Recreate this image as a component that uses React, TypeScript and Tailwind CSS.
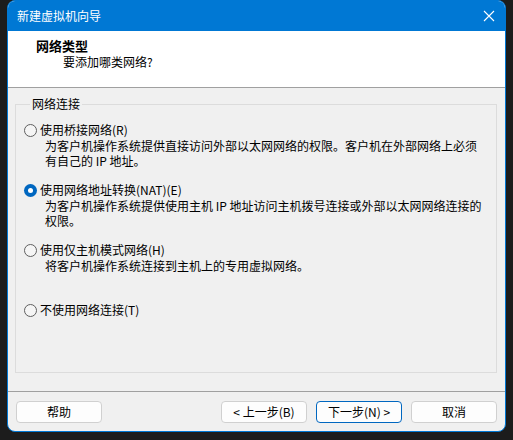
import React, { useState } from 'react';

const FONT = { fontFamily: '"Noto Sans CJK SC", "Noto Sans", sans-serif' };

interface OptionProps {
  label: string;
  lines: string[];
  checked: boolean;
  onSelect: () => void;
}

const Radio: React.FC<{ checked: boolean }> = ({ checked }) =>
  checked ? (
    <span className="flex h-[13px] w-[13px] shrink-0 items-center justify-center rounded-full bg-[#0067c0]">
      <span className="h-[5px] w-[5px] rounded-full bg-white" />
    </span>
  ) : (
    <span className="h-[13px] w-[13px] shrink-0 rounded-full border border-[#5f5f5f] bg-[#f5f5f5]" />
  );

const Option: React.FC<OptionProps> = ({ label, lines, checked, onSelect }) => (
  <div className="h-[60px]">
    <label className="flex h-[16px] cursor-default items-center gap-[3px]" onClick={onSelect}>
      <Radio checked={checked} />
      <span className="leading-[16px]">{label}</span>
    </label>
    <div className="pl-[21px]">
      {lines.map((l) => (
        <div key={l} className="whitespace-nowrap leading-[15px]">
          {l}
        </div>
      ))}
    </div>
  </div>
);

const Button: React.FC<{ children: React.ReactNode; primary?: boolean }> = ({ children, primary }) => (
  <button
    className={
      'h-[22px] w-[86px] rounded-[4px] border bg-[#fdfdfd] text-[12px] leading-[20px] text-black ' +
      (primary ? 'border-[#0067c0]' : 'border-[#d0d0d0]')
    }
  >
    {children}
  </button>
);

const options = [
  {
    label: '使用桥接网络(R)',
    lines: ['为客户机操作系统提供直接访问外部以太网网络的权限。客户机在外部网络上必须', '有自己的 IP 地址。'],
  },
  {
    label: '使用网络地址转换(NAT)(E)',
    lines: ['为客户机操作系统提供使用主机 IP 地址访问主机拨号连接或外部以太网网络连接的', '权限。'],
  },
  { label: '使用仅主机模式网络(H)', lines: ['将客户机操作系统连接到主机上的专用虚拟网络。'] },
  { label: '不使用网络连接(T)', lines: [] },
];

const App: React.FC = () => {
  const [selected, setSelected] = useState(1);

  return (
    <div className="h-[440px] w-[513px] bg-[#1c1c1c] pl-[7px]" style={FONT}>
      <div className="flex h-[432px] w-[499px] flex-col overflow-hidden rounded-[8px] border border-[#0078d4] bg-[#f0f0f0] text-[12px] text-black">
        {/* title bar */}
        <div className="flex h-[30px] shrink-0 items-center justify-between bg-[#0078d4] pl-[9px] pr-[10px] text-white">
          <span className="leading-[16px]">新建虚拟机向导</span>
          <svg width="12" height="12" viewBox="0 0 12 12" stroke="white" strokeWidth="1.1">
            <path d="M1 1L11 11M11 1L1 11" />
          </svg>
        </div>

        {/* header */}
        <div className="h-[57px] shrink-0 border-b border-[#a0a0a0] bg-white pt-[7px]">
          <div className="pl-[28px] text-[13px] font-bold leading-[16px]">网络类型</div>
          <div className="pl-[55px] leading-[16px]">要添加哪类网络?</div>
        </div>

        {/* body */}
        <div className="flex-1 pt-[8px]">
          <fieldset className="ml-[7px] mr-[8px] border border-[#dcdcdc] pb-[10px] pl-[8px] pt-[10px]">
            <legend className="ml-[6px] px-[2px] leading-[16px]">网络连接</legend>
            {options.map((o, i) => (
              <Option key={o.label} {...o} checked={selected === i} onSelect={() => setSelected(i)} />
            ))}
          </fieldset>
        </div>

        {/* footer */}
        <div className="flex shrink-0 items-center border-t border-[#a0a0a0] px-[8px] pb-[8px] pt-[9px]">
          <Button>帮助</Button>
          <div className="flex-1" />
          <div className="flex gap-[9px]">
            <Button>&lt; 上一步(B)</Button>
            <Button primary>下一步(N) &gt;</Button>
            <Button>取消</Button>
          </div>
        </div>
      </div>
    </div>
  );
};

export default App;
